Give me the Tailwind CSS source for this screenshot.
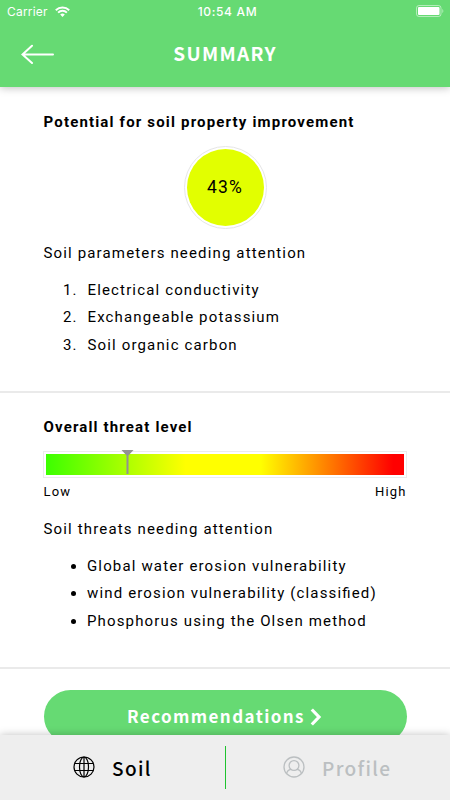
<!DOCTYPE html>
<html lang="en">
<head>
  <meta charset="UTF-8" />
  <meta name="viewport" content="width=device-width, initial-scale=1.0"/>
  <title>Summary</title>
  <script src="https://cdn.jsdelivr.net/npm/@tailwindcss/browser@4"></script>
</head>
<body class="bg-white font-[Roboto,sans-serif] text-black">
  <div class="w-[450px] h-[800px] overflow-hidden flex flex-col">

    <!-- Header -->
    <header class="relative z-10 h-[87px] shrink-0 bg-[#66da73] text-white shadow-[0_1px_8px_rgba(0,0,0,0.25)]">
      <div class="h-[23px] pl-[7px] pr-[6px] grid grid-cols-3 items-center font-[Inter,sans-serif] text-[12px] leading-none">
        <div class="flex items-center gap-[7px]">
          <span class="tracking-[0.2px]">Carrier</span>
          <svg class="w-[15px] h-[11px] -mt-px" viewBox="0 0 15 11" fill="none" stroke="currentColor" stroke-width="1.9">
            <path d="M0.8 4.2a9.6 9.6 0 0 1 13.4 0M3.1 6.6a6.3 6.3 0 0 1 8.8 0"/>
            <path d="M7.5 11 5.2 8.6a3.4 3.4 0 0 1 4.6 0z" fill="currentColor" stroke="none"/>
          </svg>
        </div>
        <div class="pl-[4px] text-center font-medium tracking-[0.65px]">10:54 AM</div>
        <svg class="-mt-px justify-self-end w-[28px] h-[12px]" viewBox="0 0 28 12" fill="none">
          <rect x="0.5" y="0.5" width="24.5" height="11" rx="2.5" stroke="white" stroke-opacity="0.5"/>
          <rect x="2" y="2" width="21.5" height="8" rx="1" fill="white"/>
          <path d="M26.3 4v4c1.4-.6 1.4-3.4 0-4z" fill="white" fill-opacity="0.5"/>
        </svg>
      </div>
      <div class="h-[62px] grid grid-cols-[1fr_auto_1fr] items-center px-[21px]">
        <svg class="w-[34px] h-[20px]" viewBox="0 0 34 20" fill="none" stroke="currentColor" stroke-width="2" stroke-linecap="round">
          <path d="M32 10.500H1.500M11 1.700 1.500 10.500l9.500 8.600"/>
        </svg>
        <h1 class="pb-[3px] font-['Noto_Sans_CJK_SC',sans-serif] font-bold text-[19px] leading-none tracking-[1.3px]">SUMMARY</h1>
      </div>
    </header>

    <main class="flex-1 min-h-0 overflow-hidden tracking-[1.15px]">
      <!-- Soil properties -->
      <section class="h-[306px] pt-[25px] px-[43.5px] border-b-2 border-[#eaeaea]">
        <h2 class="text-[15px] leading-5 font-bold tracking-[1.17px]">Potential for soil property improvement</h2>
        <div class="mt-[14px] mx-auto w-[83px] h-[83px] rounded-full border border-[#e6e6e6] p-[2px]">
          <div class="w-full h-full rounded-full bg-[#e2ff00] flex items-center justify-center text-[17.5px]">43%</div>
        </div>
        <p class="mt-[14px] text-[15px] leading-5">Soil parameters needing attention</p>
        <ol class="mt-[14px] pl-[39px] list-decimal text-[15px] leading-[27.3px]">
          <li class="pl-[5px]">Electrical conductivity</li>
          <li class="pl-[5px]">Exchangeable potassium</li>
          <li class="pl-[5px]">Soil organic carbon</li>
        </ol>
      </section>

      <!-- Threats -->
      <section class="h-[276px] pt-[24px] px-[43.5px] border-b-2 border-[#eaeaea]">
        <h2 class="text-[15px] leading-5 font-bold">Overall threat level</h2>
        <div class="relative mt-[14px] h-[27px] -mx-[0.5px] border border-[#ececec] p-[2px]">
          <div class="w-full h-full bg-[linear-gradient(90deg,#3cff00_0%,#ffff00_39%,#ffff00_60%,#ff0000_97%)]"></div>
          <svg class="absolute left-[77px] -top-[2px] w-[13px] h-[24px]" viewBox="0 0 13 24" fill="#929292">
            <path d="M0.5 0h12l-5 5.5V24h-2V5.5z"/>
          </svg>
        </div>
        <div class="mt-[4px] flex justify-between text-[13px] leading-5">
          <span>Low</span>
          <span>High</span>
        </div>
        <p class="mt-[17px] text-[15px] leading-5">Soil threats needing attention</p>
        <ul class="mt-[14px] pl-[43.5px] list-disc text-[15px] leading-[27.3px] [font-feature-settings:'liga'_1]">
          <li>Global water erosion vulnerability</li>
          <li>wind erosion vulnerability (classified)</li>
          <li>Phosphorus using the Olsen method</li>
        </ul>
      </section>

      <div class="pt-[21px] px-[43.5px]">
        <button class="w-full h-[53px] pb-px rounded-full bg-[#66da73] text-white flex items-center justify-center gap-[5px] pr-px font-['Noto_Sans_CJK_SC',sans-serif] font-bold text-[17px]">
          <span class="tracking-[1.4px]">Recommendations</span>
          <svg class="w-[12px] h-[18px] mt-[2px]" viewBox="0 0 12 18" fill="none" stroke="currentColor" stroke-width="3.2">
            <path d="M1.8 1.5 9 9l-7.2 7.5"/>
          </svg>
        </button>
      </div>
    </main>

    <!-- Tab bar -->
    <nav class="relative z-10 h-[65px] shrink-0 bg-[#eee] shadow-[0_0_8px_rgba(0,0,0,0.25)] grid grid-cols-[225px_1px_224px] items-center font-['Noto_Sans_CJK_SC',sans-serif] font-medium text-[19px] leading-none tracking-[1.35px]">
      <a class="flex items-center gap-[17px] pl-[73px]">
        <svg class="w-[22px] h-[22px] -mt-[2px]" viewBox="0 0 22 22" fill="none" stroke="currentColor" stroke-width="1.2">
          <circle cx="11" cy="11" r="10"/>
          <ellipse cx="11" cy="11" rx="4.5" ry="10"/>
          <path d="M11 1v20M2 7.500h18M2 14.500h18"/>
        </svg>
        <span class="-mt-px">Soil</span>
      </a>
      <div class="h-[43px] bg-[#1fc32f]"></div>
      <a class="flex items-center gap-[17px] pl-[57px] text-[#bbbfc1]">
        <svg class="w-[22px] h-[22px] -mt-[2px]" viewBox="0 0 22 22" fill="none" stroke="currentColor" stroke-width="1.3">
          <circle cx="11" cy="11" r="10"/>
          <circle cx="11" cy="9.500" r="4.900"/>
          <path d="M3.700 17.600c.3-2.500 2-4 4.300-4.300M18.300 17.600c-.3-2.500-2-4-4.300-4.300"/>
        </svg>
        <span class="-mt-px">Profile</span>
      </a>
    </nav>
  </div>
</body>
</html>
